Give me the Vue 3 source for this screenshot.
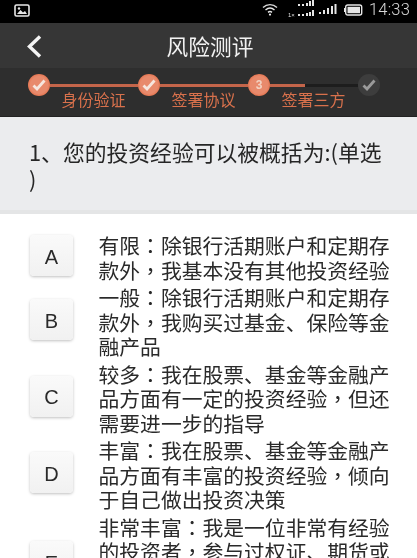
<script setup>
const steps = ['身份验证', '签署协议', '签署三方']

const options = [
  { key: 'A', lines: ['有限：除银行活期账户和定期存', '款外，我基本没有其他投资经验'] },
  { key: 'B', lines: ['一般：除银行活期账户和定期存', '款外，我购买过基金、保险等金', '融产品'] },
  { key: 'C', lines: ['较多：我在股票、基金等金融产', '品方面有一定的投资经验，但还', '需要进一步的指导'] },
  { key: 'D', lines: ['丰富：我在股票、基金等金融产', '品方面有丰富的投资经验，倾向', '于自己做出投资决策'] },
  { key: 'E', lines: ['非常丰富：我是一位非常有经验', '的投资者，参与过权证、期货或', '外汇等投资，有丰富的投资经', '验'] }
]

// The reference centres the colon and comma inside their cell.
const split = (line) => line.split(/([：，])/).filter(Boolean).map((text) => ({
  text,
  centred: text === '：' || text === '，'
}))
</script>

<template>
  <div class="phone">
    <div class="status">
      <svg class="pic" width="16" height="13" viewBox="0 0 16 13">
        <rect x="1" y="1" width="14" height="11" rx="1.5" fill="none" stroke="#e8e8e8" stroke-width="1.6" />
        <path d="M3 10 L6.5 6 L9 8.5 L11 7 L13 10 Z" fill="#e8e8e8" />
        <circle cx="5" cy="4.5" r="1.2" fill="#e8e8e8" />
      </svg>
      <div class="status-right">
        <svg width="16" height="13" viewBox="0 0 16 13">
          <path d="M1 4.5 C5 .6 11 .6 15 4.5" fill="none" stroke="#d8d8d8" stroke-width="1.4" />
          <path d="M3.5 7 C6.2 4.6 9.8 4.6 12.5 7" fill="none" stroke="#e8e8e8" stroke-width="1.4" />
          <path d="M6 9.4 C7.2 8.4 8.8 8.4 10 9.4" fill="none" stroke="#e8e8e8" stroke-width="1.4" />
          <circle cx="8" cy="11.6" r="1.1" fill="#e8e8e8" />
        </svg>
        <svg class="dual" width="30" height="19" viewBox="0 0 30 19">
          <text x="0" y="17.5" class="onex">1×</text>
          <path d="M10 15h2v2h-2zM14 15h2v2h-2zM18 14h2v3h-2zM21 13h2v4h-2zM24 11h2v6h-2zM10 5h2v2h-2zM14 5h2v2h-2zM18 4h2v3h-2zM21 2h2v5h-2zM24 0h2v7h-2z" fill="#e6e6e6" />
        </svg>
        <svg width="19" height="13" viewBox="0 0 19 13">
          <path d="M1 9h2v2H1zM5 7h2v4H5zM9 5h2v6H9zM13 3h2v8h-2zM16.500 1h2v10h-2z" fill="#e6e6e6" />
        </svg>
        <svg class="battery" width="19" height="12" viewBox="0 0 19 12">
          <rect x="1.7" y="1" width="16" height="10" rx="2" fill="none" stroke="#e6e6e6" stroke-width="1.4" />
          <rect x="3.500" y="2.800" width="12.500" height="6.400" fill="#e6e6e6" />
          <rect x="0" y="4" width="1" height="4" fill="#e6e6e6" />
        </svg>
        <span class="time">14:33</span>
      </div>
    </div>

    <div class="dark">
      <div class="header">
        <svg class="back" width="17" height="25" viewBox="0 0 17 25">
          <path d="M14 2.500 L3.500 12.500 L14 22.500" fill="none" stroke="#f4f4f4" stroke-width="3.400" />
        </svg>
        <span class="title">风险测评</span>
      </div>
      <div class="stepper">
        <div class="track">
          <span class="dot">
            <svg width="14" height="12" viewBox="0 0 14 12"><path d="M1.500 6.500 L5 10 L12.500 1.500" fill="none" stroke="#f6e6de" stroke-width="2.800" /></svg>
          </span>
          <span class="seg on"></span>
          <span class="dot">
            <svg width="14" height="12" viewBox="0 0 14 12"><path d="M1.500 6.500 L5 10 L12.500 1.500" fill="none" stroke="#f6e6de" stroke-width="2.800" /></svg>
          </span>
          <span class="seg on"></span>
          <span class="dot num">3</span>
          <span class="seg half on"></span>
          <span class="seg rest"></span>
          <span class="dot off">
            <svg width="14" height="12" viewBox="0 0 14 12"><path d="M1.500 6.500 L5 10 L12.500 1.500" fill="none" stroke="#9a9a9a" stroke-width="2.800" /></svg>
          </span>
        </div>
        <div class="labels">
          <span v-for="s in steps" :key="s">{{ s }}</span>
        </div>
      </div>
    </div>

    <div class="question">
      <p>1、您的投资经验可以被概括为:(单选<br />)</p>
    </div>

    <div class="options">
      <div v-for="o in options" :key="o.key" class="option">
        <div class="key">{{ o.key }}</div>
        <div class="text">
          <div v-for="(line, i) in o.lines" :key="i" class="line">
            <span v-for="(p, j) in split(line)" :key="j" :class="{ centred: p.centred }">{{ p.text }}</span>
          </div>
        </div>
      </div>
    </div>
  </div>
</template>

<style scoped>
.phone {
  width: 417px;
  height: 558px;
  overflow: hidden;
  background: #fff;
  font-family: "Noto Sans CJK SC", "Liberation Sans", sans-serif;
  filter: blur(0.35px);
}
.status {
  height: 23px;
  background: #000;
  display: flex;
  align-items: center;
  justify-content: space-between;
  padding: 0 7px 0 14px;
}
.pic { margin-top: -3px; }
.status-right {
  display: flex;
  align-items: center;
  gap: 0;
}
.status-right > svg { margin-top: -4px; }
.dual { margin-left: 10px; margin-top: -6px !important; }
.onex { font: 6px "Liberation Sans", sans-serif; fill: #ddd; }
.battery { margin-left: 7px; }
.time {
  margin-left: 6px;
  margin-top: -3px;
  font: 300 16.500px/20px Roboto, "Liberation Sans", sans-serif;
  color: #d8d8d8;
  letter-spacing: 0.2px;
}
.dark { background: #333; }
.header {
  height: 45px;
  background: #363636;
  display: flex;
  align-items: center;
  justify-content: center;
  position: relative;
}
.back { position: absolute; left: 26px; top: 11px; }
.title {
  font-size: 21.700px;
  line-height: 30px;
  color: #f2f2f2;
  margin-left: 3px;
}
.stepper {
  height: 49px;
  background: #2e2e2e;
  padding: 6px 0 0 28px;
  box-sizing: border-box;
  border-bottom: 1px solid #222;
}
.track {
  display: flex;
  align-items: center;
  height: 22px;
}
.dot {
  width: 22px;
  height: 22px;
  flex: none;
  border-radius: 50%;
  background: radial-gradient(circle at 50% 50%, #e88a6c 0 55%, #e4704a 75%);
  display: flex;
  align-items: center;
  justify-content: center;
}
.num {
  font: 700 12px/22px "Liberation Sans", sans-serif;
  color: #f3d2c2;
}
.off { background: #3d3d3d; }
.seg { width: 88px; height: 3px; flex: none; }
.on { background: #c4654a; }
.half { width: 35px; }
.rest { width: 53px; background: #1d1d1d; }
.labels {
  display: flex;
  gap: 46px;
  margin: -7px 0 0 33.500px;
  font-size: 16px;
  line-height: 21px;
  color: #d8714c;
}
.question {
  height: 97px;
  box-sizing: border-box;
  background: #ebecee;
  padding: 21px 20px 0 29px;
  border-bottom: 4px solid #e4e5e6;
}
.question p {
  margin: 0;
  font-size: 21.800px;
  line-height: 27px;
  color: #262626;
  white-space: nowrap;
}
.options {
  padding: 19px 0 0 30px;
  display: flex;
  flex-direction: column;
  gap: 3px;
}
.option {
  display: flex;
  align-items: center;
  gap: 25.500px;
}
.key {
  width: 43px;
  height: 41px;
  flex: none;
  margin-top: -4px;
  box-sizing: border-box;
  border-radius: 4px;
  background: linear-gradient(#fafafa, #f1f1f1);
  box-shadow: 0 1px 3px rgba(0, 0, 0, 0.25);
  display: flex;
  align-items: center;
  justify-content: center;
  padding-top: 3px;
  font: 20px "Liberation Sans", sans-serif;
  color: #2a2a2a;
}
.text { width: 292px; flex: none; }
.line {
  font-size: 20.800px;
  line-height: 24.500px;
  color: #2a2a2a;
  white-space: nowrap;
}
.centred { font-family: "Noto Sans CJK TC", sans-serif; }
</style>
